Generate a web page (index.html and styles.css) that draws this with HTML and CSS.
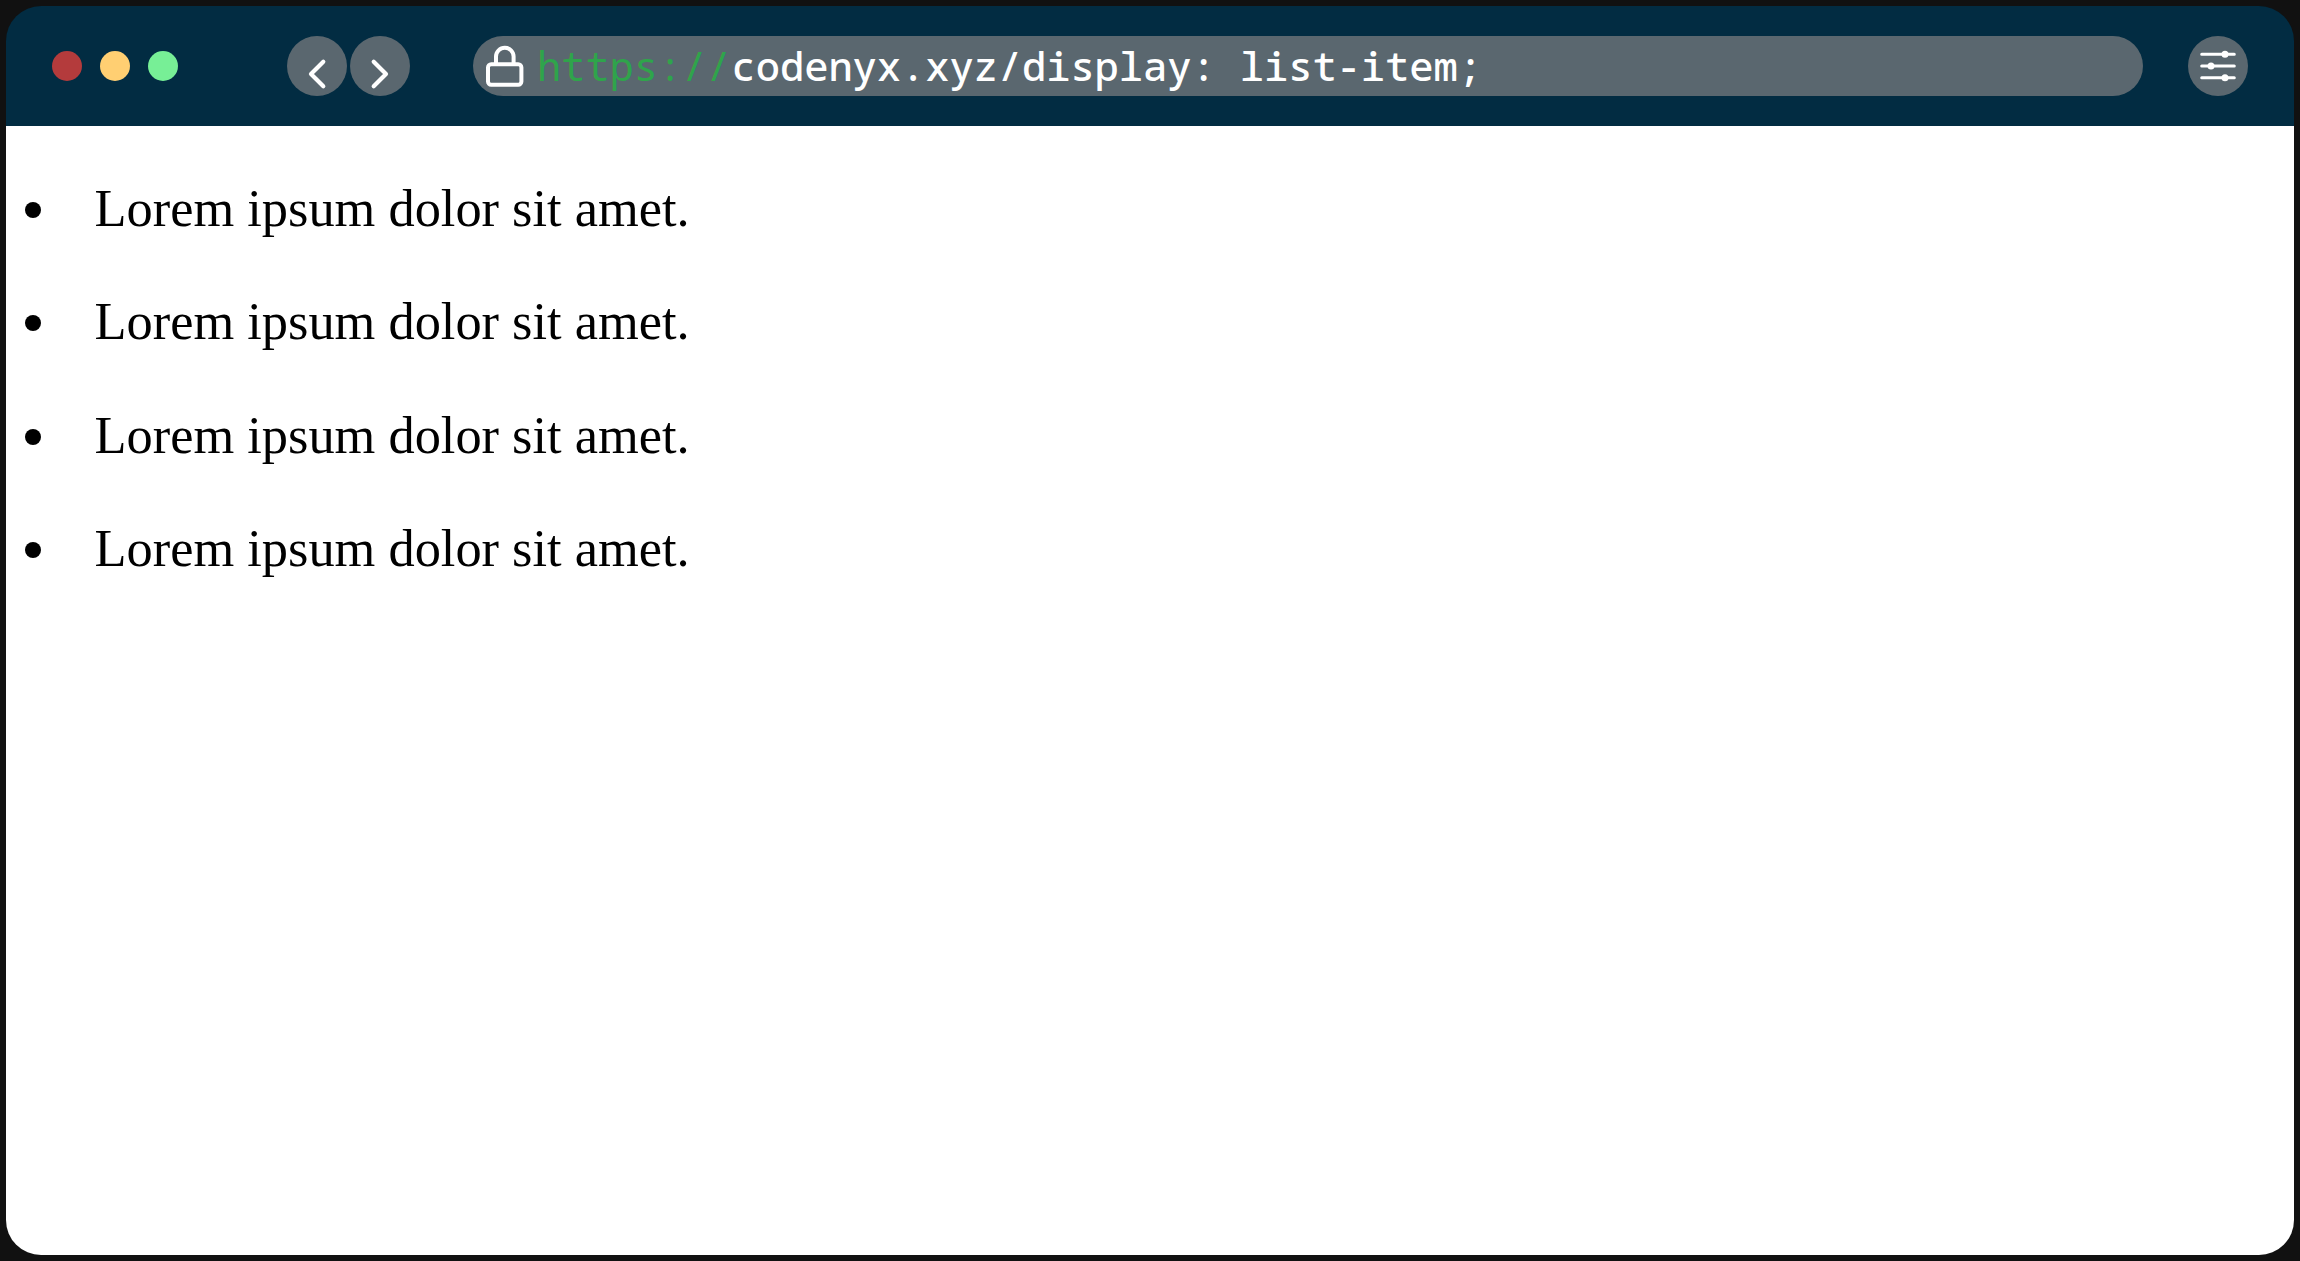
FILE: index.html
```html
<!DOCTYPE html>
<html lang="en">
<head>
<meta charset="utf-8">
<title>display: list-item;</title>
<link rel="stylesheet" href="styles.css">
</head>
<body>
<div class="window">
  <header class="toolbar">
    <div class="lights">
      <span class="light red"></span>
      <span class="light yellow"></span>
      <span class="light green"></span>
    </div>
    <nav class="nav">
      <span class="round"><svg viewBox="0 0 60 60"><path stroke-width="4.2" d="M36.3 25.7 24 38l12.3 12.3"/></svg></span>
      <span class="round"><svg viewBox="0 0 60 60"><path stroke-width="4.2" d="M23.7 25.7 36 38 23.7 50.3"/></svg></span>
    </nav>
    <div class="address">
      <svg class="lock" viewBox="0 0 42 60"><rect x="5" y="28.2" width="33.4" height="20.6" rx="3.2"/><path d="M13 28v-7.4a8.8 8.8 0 0 1 17.6 0V28"/></svg>
      <span class="url"><span class="scheme">https://</span>codenyx.xyz/display: list-item;</span>
    </div>
    <span class="round"><svg viewBox="0 0 60 60"><path stroke-width="3" d="M13.7 18.3h32.6M13.7 30h32.6M13.7 41.7h32.6"/><g class="knobs"><circle cx="37" cy="18.3" r="3.5"/><circle cx="23" cy="30" r="3.5"/><circle cx="37" cy="41.7" r="3.5"/></g></svg></span>
  </header>
  <ul class="list">
    <li>Lorem ipsum dolor sit amet.</li>
    <li>Lorem ipsum dolor sit amet.</li>
    <li>Lorem ipsum dolor sit amet.</li>
    <li>Lorem ipsum dolor sit amet.</li>
  </ul>
</div>
</body>
</html>
```
FILE: styles.css
```css
* { box-sizing: border-box; }
body {
  margin: 0;
  height: 1261px;
  padding: 6px;
  background: #111;
}
.window {
  display: flex;
  flex-direction: column;
  height: 100%;
}
.toolbar {
  flex: none;
  display: flex;
  align-items: center;
  height: 120px;
  padding: 0 46px;
  border-radius: 35px 35px 0 0;
  background: #022c42;
}
.lights { display: flex; gap: 18px; }
.light { width: 30px; height: 30px; border-radius: 50%; }
.red { background: #b43b3c; }
.yellow { background: #ffcf72; }
.green { background: #77ef96; }
.nav { display: flex; gap: 3px; margin-left: 109px; }
.round {
  flex: none;
  width: 60px;
  height: 60px;
  border-radius: 50%;
  background: #5a676f;
}
svg {
  display: block;
  fill: none;
  stroke: #fff;
  stroke-linecap: round;
  stroke-linejoin: round;
}
.knobs { fill: #fff; stroke: none; }
.address {
  flex: 1;
  display: flex;
  align-items: center;
  height: 60px;
  margin: 0 45px 0 63px;
  padding-left: 10px;
  border-radius: 30px;
  background: #5a676f;
}
.lock { width: 42px; height: 60px; stroke-width: 4; }
.url {
  margin-left: 12px;
  color: #fff;
  font: 500 40.5px/60px "Noto Sans Mono", "Liberation Mono", monospace;
  letter-spacing: -0.1px;
  white-space: pre;
}
.scheme { margin-right: 1px; color: #2fa44b; font-weight: 400; }
.list {
  flex: 1;
  margin: 0;
  padding: 26px 0 0 19px;
  border-radius: 0 0 35px 35px;
  background: #fff;
  list-style: none;
  color: #000;
  font: 52.4px/113.33px "Liberation Serif", serif;
}
.list li { display: flex; align-items: center; gap: 53.5px; }
.list li::before {
  content: "";
  width: 16px;
  height: 16px;
  margin-top: 3px;
  border-radius: 50%;
  background: #000;
}
```
